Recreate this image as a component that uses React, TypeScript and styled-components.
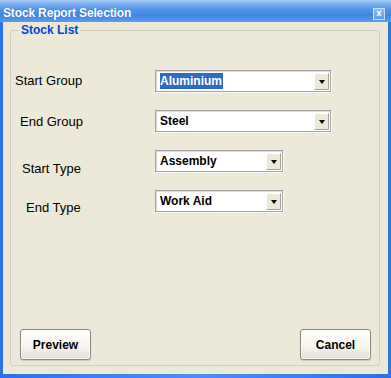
import React, { FC } from 'react'
import styled, { createGlobalStyle } from 'styled-components'

const GlobalStyle = createGlobalStyle`
  html, body {
    margin: 0;
    padding: 0;
    background: #ece9d8;
  }
  body {
    font-family: "Liberation Sans", Arial, sans-serif;
  }
`

const Window = styled.div`
  width: 391px;
  height: 378px;
  display: flex;
  flex-direction: column;
  box-sizing: border-box;
  background: linear-gradient(90deg, #2a73e0, #4b8ff0 50%, #2a73e0);
  padding: 0 3px 4px 3px;
`

const TitleBar = styled.div`
  height: 22px;
  margin: 0 -3px;
  box-sizing: border-box;
  padding: 4px 6px 0 3px;
  display: flex;
  align-items: center;
  justify-content: space-between;
  background: linear-gradient(#a9cdf8 0%, #7db1f2 18%, #4f92ea 45%, #3f87e6 70%, #5b9ded 100%);
`

const Title = styled.span`
  color: #fff;
  font-weight: bold;
  font-size: 12px;
  letter-spacing: -0.15px;
  text-shadow: 0 0 1px rgba(20, 60, 140, 0.5);
`

const CloseBox = styled.div`
  width: 12px;
  height: 12px;
  margin-top: 2px;
  box-sizing: border-box;
  border: 1px solid #c4ddfb;
  background: linear-gradient(#8fbdf5, #5f9cec);
  color: #fff;
  font-size: 9px;
  font-weight: bold;
  line-height: 9px;
  text-align: center;
`

const Client = styled.div`
  flex: 1;
  display: flex;
  flex-direction: column;
  background: #ece9d8;
`

const GroupBox = styled.fieldset`
  flex: 1;
  margin: 1px 8px 8px 7px;
  padding: 0 0 5px 0;
  border: 1px solid #d0d0bf;
  border-radius: 3px;
  display: flex;
  flex-direction: column;
  min-width: 0;
`

const GroupTitle = styled.legend`
  margin-left: 8px;
  padding: 0 2px;
  color: #0046d5;
  font-weight: bold;
  font-size: 12px;
  line-height: 14px;
`

const Rows = styled.div`
  display: flex;
  flex-direction: column;
  gap: 18px;
  margin-top: 33px;
`

const Row = styled.div`
  display: flex;
  align-items: flex-start;
  height: 22px;
`

const Label = styled.div<{ $x: number; $y: number }>`
  width: 144px;
  flex-shrink: 0;
  box-sizing: border-box;
  padding-left: ${(p) => p.$x}px;
  padding-top: ${(p) => p.$y}px;
  font-size: 13px;
  line-height: 16px;
  color: #000;
`

const Combo = styled.div<{ $width: number }>`
  width: ${(p) => p.$width}px;
  height: 22px;
  box-sizing: border-box;
  display: flex;
  align-items: stretch;
  background: #fff;
  border: 1px solid #a3a3a3;
  box-shadow: 1px 1px 0 #fbfbf8, inset 1px 1px 0 #dcdcd6;
`

const ComboText = styled.div`
  flex: 1;
  display: flex;
  align-items: center;
  padding-left: 4px;
  font-size: 12px;
  font-weight: bold;
  color: #000;
`

const Selected = styled.span`
  background: #316ac5;
  color: #fff;
  padding: 1px 1px 1px 0;
`

const DropButton = styled.div`
  width: 15px;
  margin: 2px 1px 1px 0;
  box-sizing: border-box;
  background: #ece9d8;
  border-top: 1px solid #fff;
  border-left: 1px solid #fff;
  border-right: 1px solid #a0a0a0;
  border-bottom: 1px solid #a0a0a0;
  display: flex;
  align-items: center;
  justify-content: center;
  &::after {
    content: '';
    margin-top: 1px;
    border-left: 3.5px solid transparent;
    border-right: 3.5px solid transparent;
    border-top: 4px solid #000;
  }
`

const ButtonRow = styled.div`
  margin-top: auto;
  display: flex;
  justify-content: space-between;
  padding: 0 8px 0 9px;
`

const Button = styled.button`
  width: 71px;
  height: 31px;
  box-sizing: border-box;
  border: 1px solid #8a8a80;
  border-radius: 3px;
  background: linear-gradient(#ffffff, #f6f5f0 55%, #e2dfd2);
  box-shadow: inset 0 0 0 1px #fcfcf8, 0 1px 1px rgba(0, 0, 0, 0.15);
  font-family: "Liberation Sans", Arial, sans-serif;
  font-size: 12px;
  font-weight: bold;
  color: #000;
  padding: 0;
`

interface SelectProps {
  value: string
  width: number
  selected?: boolean
}

const Select: FC<SelectProps> = ({ value, width, selected }) => (
  <Combo $width={width}>
    <ComboText>{selected ? <Selected>{value}</Selected> : value}</ComboText>
    <DropButton />
  </Combo>
)

const fields = [
  { label: 'Start Group', value: 'Aluminium', width: 176, x: 4, y: 3, selected: true },
  { label: 'End Group', value: 'Steel', width: 176, x: 9, y: 4 },
  { label: 'Start Type', value: 'Assembly', width: 128, x: 11, y: 11 },
  { label: 'End Type', value: 'Work Aid', width: 128, x: 15, y: 10 },
]

const App: FC = () => (
  <>
    <GlobalStyle />
    <Window>
      <TitleBar>
        <Title>Stock Report Selection</Title>
        <CloseBox>x</CloseBox>
      </TitleBar>
      <Client>
        <GroupBox>
          <GroupTitle>Stock List</GroupTitle>
          <Rows>
            {fields.map((f) => (
              <Row key={f.label}>
                <Label $x={f.x} $y={f.y}>{f.label}</Label>
                <Select value={f.value} width={f.width} selected={f.selected} />
              </Row>
            ))}
          </Rows>
          <ButtonRow>
            <Button>Preview</Button>
            <Button>Cancel</Button>
          </ButtonRow>
        </GroupBox>
      </Client>
    </Window>
  </>
)

export default App
